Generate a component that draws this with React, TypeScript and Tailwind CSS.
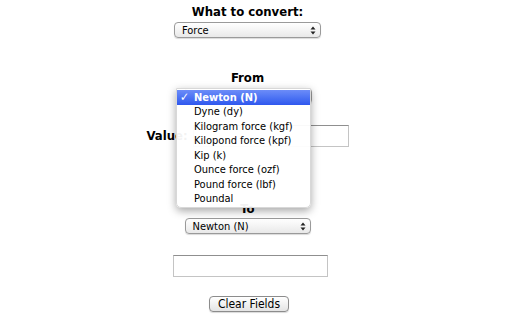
const Stepper = () => (
  <svg width="6" height="9" viewBox="0 0 6 9" className="shrink-0">
    <path d="M3 0.5 L5.5 3.5 H0.5 Z" fill="#222" />
    <path d="M3 8.5 L5.5 5.5 H0.5 Z" fill="#222" />
  </svg>
);

const MacSelect = ({ label, width }: { label: string; width: string }) => (
  <div
    className={`${width} h-4 flex items-center justify-between pl-[7px] pr-[4px] rounded-[4px] border border-[#9a9a9a] bg-gradient-to-b from-white to-[#e9e9e9] shadow-[0_1px_1px_rgba(0,0,0,0.15)] text-[11px] leading-none text-black`}
  >
    <span>{label}</span>
    <Stepper />
  </div>
);

const TextBox = ({ width }: { width: string }) => (
  <div className={`${width} h-[22px] bg-white border border-[#c4c4c4] border-t-[#8f8f8f]`} />
);

const App = () => {
  const units = [
    "Newton (N)",
    "Dyne (dy)",
    "Kilogram force (kgf)",
    "Kilopond force (kpf)",
    "Kip (k)",
    "Ounce force (ozf)",
    "Pound force (lbf)",
    "Poundal",
  ];

  return (
    <div className="relative w-[512px] h-[320px] bg-white overflow-hidden font-['DejaVu_Sans_Condensed','DejaVu_Sans',sans-serif] text-black">
      <div className="w-[495px] flex flex-col items-center">
        <div className="mt-[4px] h-4 text-[13px] font-bold leading-4">What to convert:</div>
        <div className="mt-[2px]">
          <MacSelect label="Force" width="w-[147px]" />
        </div>

        <div className="mt-[32px] h-4 text-[13px] font-bold leading-4">From</div>
        <div className="mt-[2px]">
          <MacSelect label="Newton (N)" width="w-[128px]" />
        </div>

        <div className="mt-[21px] flex items-center gap-[5px]">
          <span className="text-[13px] font-bold leading-4">Value:</span>
          <TextBox width="w-[156px]" />
        </div>

        <div className="mt-[54px] h-4 text-[13px] font-bold leading-4">To</div>
        <div className="mt-[1px]">
          <MacSelect label="Newton (N)" width="w-[126px]" />
        </div>

        <div className="mt-[21px] ml-[5px]">
          <TextBox width="w-[155px]" />
        </div>

        <div className="mt-[19px] ml-[3px] h-4 px-[8px] flex items-center rounded-[4px] border border-[#8c8c8c] bg-gradient-to-b from-white to-[#e4e4e4] shadow-[0_1px_1px_rgba(0,0,0,0.15)] text-[12px] leading-none">
          Clear Fields
        </div>
      </div>

      {/* open dropdown menu */}
      <div className="absolute left-[176px] top-[88px] w-[135px] h-[120px] pt-[1px] bg-white/95 rounded-b-[5px] shadow-[0_3px_8px_rgba(0,0,0,0.35)] border border-[#d8d8d8]">
        {units.map((u, i) => (
          <div
            key={u}
            className={`h-[14.5px] flex items-center text-[11px] leading-none ${
              i === 0 ? "bg-gradient-to-b from-[#6c8cf8] to-[#2f57ee] text-white font-bold" : "text-black"
            }`}
          >
            <span className="w-[17px] pl-[3px] text-[12px] font-bold">{i === 0 ? "✓" : ""}</span>
            <span>{u}</span>
          </div>
        ))}
      </div>
    </div>
  );
};

export default App;
